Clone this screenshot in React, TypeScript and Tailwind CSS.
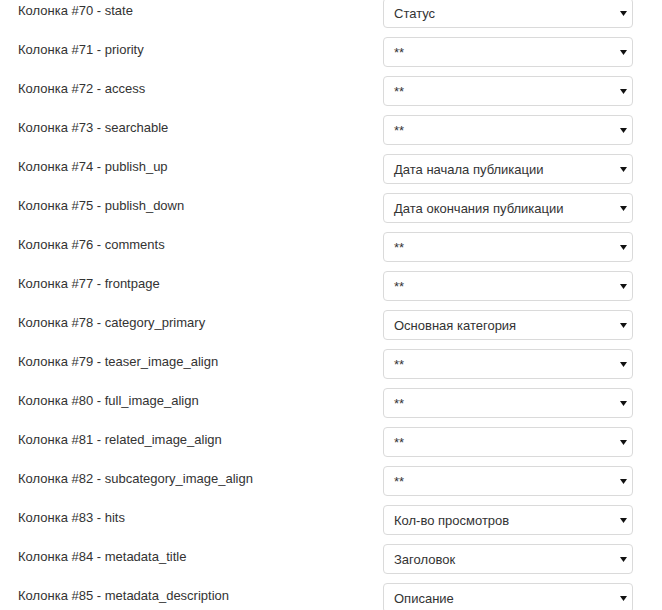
import React from "react";

const rows: [string, string][] = [
  ["Колонка #70 - state", "Статус"],
  ["Колонка #71 - priority", "**"],
  ["Колонка #72 - access", "**"],
  ["Колонка #73 - searchable", "**"],
  ["Колонка #74 - publish_up", "Дата начала публикации"],
  ["Колонка #75 - publish_down", "Дата окончания публикации"],
  ["Колонка #76 - comments", "**"],
  ["Колонка #77 - frontpage", "**"],
  ["Колонка #78 - category_primary", "Основная категория"],
  ["Колонка #79 - teaser_image_align", "**"],
  ["Колонка #80 - full_image_align", "**"],
  ["Колонка #81 - related_image_align", "**"],
  ["Колонка #82 - subcategory_image_align", "**"],
  ["Колонка #83 - hits", "Кол-во просмотров"],
  ["Колонка #84 - metadata_title", "Заголовок"],
  ["Колонка #85 - metadata_description", "Описание"],
];

export default function App() {
  return (
    <div
      className="w-[662px] h-[610px] overflow-hidden bg-white text-[#333] text-[13px] leading-[18px]"
      style={{ fontFamily: '"Liberation Sans", Arial, sans-serif' }}
    >
      <div className="-mt-[2px] flex flex-col">
        {rows.map(([label, value]) => (
          <div key={label} className="flex h-[39px] shrink-0">
            <div className="w-[383px] pl-[18px] pt-[4px]">{label}</div>
            <div className="relative w-[250px] h-[30px] border border-[#dadada] rounded-[4px] bg-white pl-[10px] pt-[6px]">
              {value}
              <svg
                className="absolute left-[236px] top-[12px]"
                width="7"
                height="5"
                viewBox="0 0 7 5"
              >
                <polygon points="0,0 7,0 3.5,5" fill="#111" />
              </svg>
            </div>
          </div>
        ))}
      </div>
    </div>
  );
}
